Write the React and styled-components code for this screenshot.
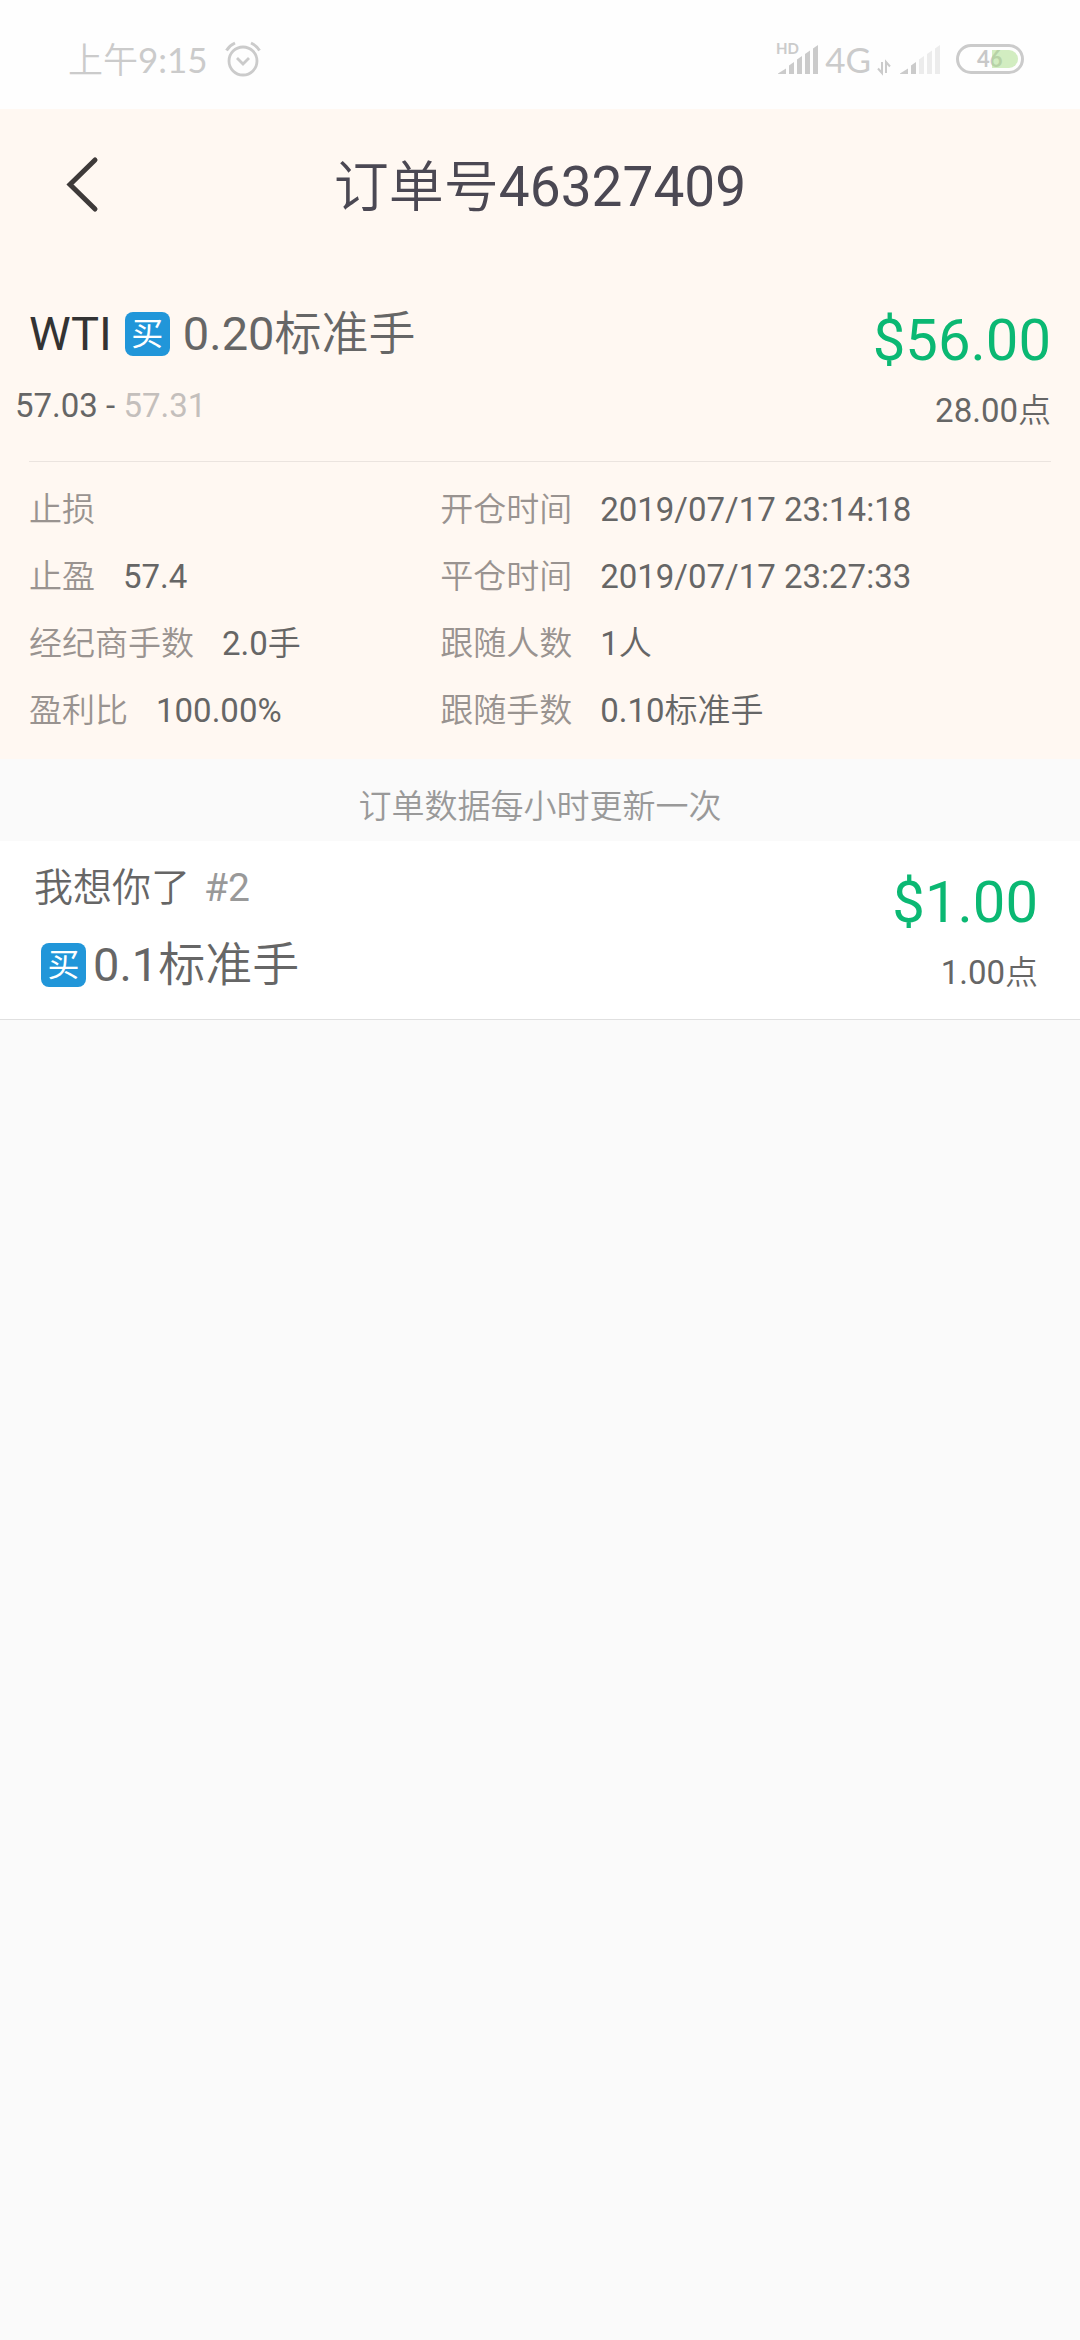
import styled, { createGlobalStyle } from 'styled-components';

const GlobalStyle = createGlobalStyle`
  * {
    box-sizing: border-box;
  }

  body {
    margin: 0;
    background: #fafafa;
    font-family: Roboto, 'Noto Sans CJK SC', sans-serif;
    color: #666;
  }

  h1, h2, p, dl, dd, ul {
    margin: 0;
    padding: 0;
    font-weight: 400;
  }
`;

const Page = styled.div`
  min-height: 100vh;
`;

const StatusBar = styled.div`
  display: flex;
  justify-content: space-between;
  align-items: center;
  height: 109px;
  padding: 9px 56px 0 68px;
  background: #fefefe;
  color: #cbcbcb;
  font-family: Lato, 'Noto Sans CJK SC', sans-serif;
  font-size: 35px;
  line-height: 40px;
`;

const StatusGroup = styled.div`
  display: flex;
  align-items: center;
  gap: ${({ $gap }) => $gap}px;
`;

const Icon = styled.svg`
  display: block;
  flex: none;
  overflow: visible;
`;

// Chinese characters next to digits are set one step lighter
const Han = styled.span`
  font-weight: 350;
`;

const Order = styled.section`
  background: #fff8f2;
  padding-bottom: 15px;
`;

const Header = styled.header`
  display: grid;
  grid-template-columns: 140px 1fr 140px;
  align-items: center;
  height: 156px;
`;

const BackButton = styled.button`
  padding: 20px 43px 25px 67px;
  border: none;
  background: transparent;
  cursor: pointer;
`;

const Title = styled.h1`
  color: #4b4853;
  font-size: 55px;
  line-height: 72px;
  text-align: center;
`;

const Summary = styled.div`
  display: flex;
  justify-content: space-between;
  padding: 37px 29px 26px 15px;
`;

const TradeLine = styled.div`
  display: flex;
  align-items: center;
  gap: ${({ $gap }) => $gap}px;
  padding-left: ${({ $indent }) => $indent}px;
  font-size: 47px;
  line-height: 64px;
`;

const Symbol = styled.h2`
  color: #333;
  font-size: 47px;
`;

const Badge = styled.span`
  width: 45px;
  height: 44px;
  border-radius: 8px;
  background: #2196d9;
  color: #fff;
  font-size: 32px;
  line-height: 44px;
  text-align: center;
`;

const PriceRange = styled.p`
  margin-top: 16px;
  font-size: 33px;
  line-height: 48px;
`;

const ClosePrice = styled.span`
  color: #c4bfbc;
`;

const Result = styled.div`
  text-align: right;
`;

const Amount = styled.p`
  color: #0bb873;
  font-size: 58px;
  line-height: 76px;
`;

const Points = styled.p`
  margin-top: 9px;
  font-size: 33px;
  line-height: 48px;
`;

const Details = styled.dl`
  display: grid;
  grid-template-columns: 2fr 3fr;
  column-gap: 4px;
  margin: 0 29px;
  padding-top: 14px;
  border-top: 1px solid #ebe4df;
`;

const Detail = styled.div`
  display: flex;
  gap: 28px;
  font-size: 33px;
  line-height: 67px;
`;

const DetailLabel = styled.dt`
  color: #999390;
  font-weight: 350;
`;

const Notice = styled.p`
  padding: 25px 0 11px;
  color: #999;
  font-size: 33px;
  font-weight: 350;
  line-height: 46px;
  text-align: center;
`;

const FollowerList = styled.ul`
  list-style: none;
`;

const Follower = styled.li`
  display: flex;
  justify-content: space-between;
  padding: 23px 42px 22px 34px;
  border-bottom: 1px solid #e0e0e0;
  background: #fff;
`;

const FollowerName = styled.p`
  margin-bottom: 21px;
  font-size: 39px;
  line-height: 48px;
`;

const Rank = styled.span`
  margin-left: 14px;
  color: #999;
`;

const details = [
  { label: '止损', value: '' },
  { label: '开仓时间', value: '2019/07/17 23:14:18' },
  { label: '止盈', value: '57.4' },
  { label: '平仓时间', value: '2019/07/17 23:27:33' },
  { label: '经纪商手数', value: '2.0', unit: '手' },
  { label: '跟随人数', value: '1', unit: '人' },
  { label: '盈利比', value: '100.00%' },
  { label: '跟随手数', value: '0.10', unit: '标准手' },
];

const followers = [
  { name: '我想你了', rank: '#2', volume: '0.1', amount: '$1.00', points: '1.00' },
];

const AlarmIcon = () => (
  <Icon width="36" height="36" viewBox="0 0 36 36" fill="none" stroke="#cbcbcb" strokeWidth="2.8">
    <circle cx="18" cy="20" r="14" />
    <path d="M12 17l6 6 6-6" />
    <path d="M1.5 9.5Q4.5 4.5 10 2M34.5 9.5Q31.5 4.5 26 2" strokeWidth="3" />
  </Icon>
);

const bars = [
  'M0 28.5L8 23.5V29H0z',
  'M11 20.5L16 17V29h-5z',
  'M19 14.5L24 11V29h-5z',
  'M27 9L32 5.5V29h-5z',
  'M35 3.5L40 0V29h-5z',
];

const SignalIcon = ({ level, hd }) => (
  <Icon width="40" height="29" viewBox="0 0 40 29">
    {bars.map((d, i) => (
      <path key={d} d={d} fill={i < level ? '#cbcbcb' : '#ececec'} />
    ))}
    {hd && (
      <text x="-2" y="9" fontSize="15" fontWeight="700" fill="#cbcbcb">HD</text>
    )}
  </Icon>
);

const DataIcon = () => (
  <Icon width="12" height="29" viewBox="0 0 12 29" fill="none" stroke="#cbcbcb" strokeWidth="2">
    <path d="M4 17v11L0 23.5M8 28V17l4 4.5" />
  </Icon>
);

const BatteryIcon = () => (
  <Icon width="68" height="30" viewBox="0 0 68 30">
    <rect x="1.5" y="1.5" width="65" height="27" rx="13.5" fill="none" stroke="#cbcbcb" strokeWidth="3" />
    <text x="21" y="23" fontSize="22" fontWeight="700" fill="#c8c8c8">46</text>
    <path d="M36 6h17a9 9 0 0 1 0 18H36z" fill="#a6dc84" fillOpacity="0.5" />
  </Icon>
);

const App = () => {
  return (
    <Page>
      <GlobalStyle />
      <StatusBar>
        <StatusGroup $gap={17}>
          <span>
            <Han>上午</Han>9:15
          </span>
          <AlarmIcon />
        </StatusGroup>
        <StatusGroup $gap={16}>
          <StatusGroup $gap={10}>
            <StatusGroup $gap={7}>
              <SignalIcon level={5} hd />
              <span>4G</span>
              <DataIcon />
            </StatusGroup>
            <SignalIcon level={2} />
          </StatusGroup>
          <BatteryIcon />
        </StatusGroup>
      </StatusBar>

      <Order>
        <Header>
          <BackButton type="button" aria-label="返回">
            <Icon width="30" height="55" viewBox="0 0 30 55" fill="none" stroke="#3e3a39" strokeWidth="5" strokeLinecap="round">
              <path d="M28 3L3 27.5 28 52" />
            </Icon>
          </BackButton>
          <Title>
            <Han>订单号</Han>46327409
          </Title>
        </Header>

        <Summary>
          <div>
            <TradeLine $gap={13} $indent={14}>
              <Symbol>WTI</Symbol>
              <Badge>买</Badge>
              <span>
                0.20<Han>标准手</Han>
              </span>
            </TradeLine>
            <PriceRange>
              57.03 - <ClosePrice>57.31</ClosePrice>
            </PriceRange>
          </div>
          <Result>
            <Amount>$56.00</Amount>
            <Points>
              28.00<Han>点</Han>
            </Points>
          </Result>
        </Summary>

        <Details>
          {details.map((item) => (
            <Detail key={item.label}>
              <DetailLabel>{item.label}</DetailLabel>
              <dd>
                {item.value}
                {item.unit && <Han>{item.unit}</Han>}
              </dd>
            </Detail>
          ))}
        </Details>
      </Order>

      <Notice>订单数据每小时更新一次</Notice>

      <FollowerList>
        {followers.map((item) => (
          <Follower key={item.rank}>
            <div>
              <FollowerName>
                <Han>{item.name}</Han>
                <Rank>{item.rank}</Rank>
              </FollowerName>
              <TradeLine $gap={7} $indent={7}>
                <Badge>买</Badge>
                <span>
                  {item.volume}
                  <Han>标准手</Han>
                </span>
              </TradeLine>
            </div>
            <Result>
              <Amount>{item.amount}</Amount>
              <Points>
                {item.points}
                <Han>点</Han>
              </Points>
            </Result>
          </Follower>
        ))}
      </FollowerList>
    </Page>
  );
};

export default App;
